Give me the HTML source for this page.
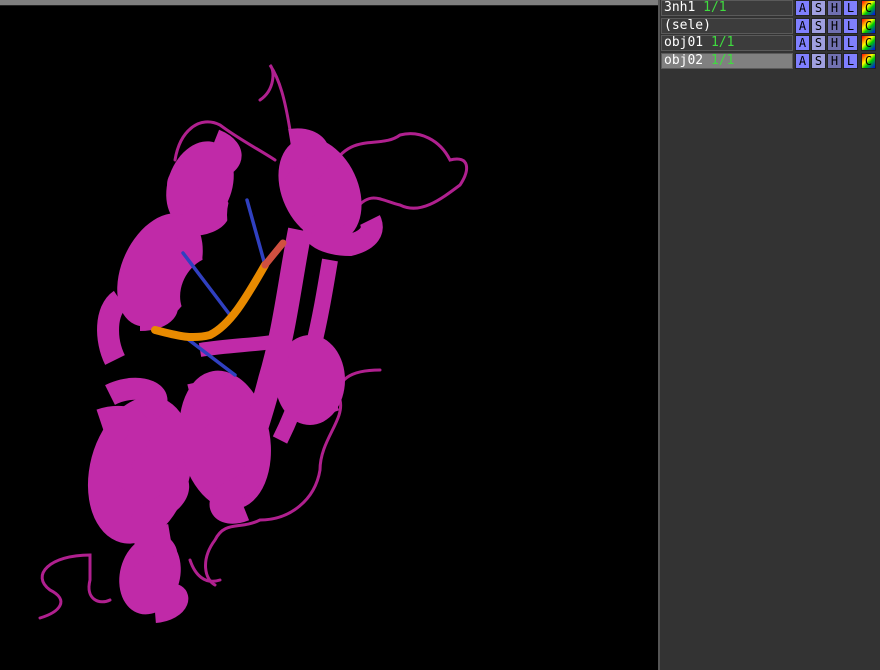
<!DOCTYPE html>
<html><head><style>
body{margin:0;width:880px;height:670px;background:#000;overflow:hidden;position:relative;font-family:"DejaVu Sans Mono","Liberation Mono",monospace;}
#top{position:absolute;left:0;top:0;width:658px;height:5px;background:#7f7f7f;border-bottom:1px solid #222;}
#panel{position:absolute;left:658px;top:0;width:222px;height:670px;background:#333;border-left:2px solid #555;box-sizing:border-box;}
.row{position:absolute;left:661px;height:16px;width:219px;}
.name{position:absolute;left:0;top:0;width:132px;height:16px;background:#3c3c3c;border:1px solid #5a5a5a;box-sizing:border-box;color:#fff;font-size:13px;line-height:14px;padding-left:2px;white-space:pre;}
.name.sel{background:#808080;}
.name b{font-weight:normal;color:#3fdc3f;}
.btn{position:absolute;top:0;width:15px;height:16px;box-sizing:border-box;border:1px solid #222;color:#000;font-size:12px;line-height:15px;text-align:center;}
</style></head><body>
<div id="top"></div>
<div id="panel"></div>

<div class="row" style="top:0"><div class="name">3nh1 <b>1/1</b></div>
<div class="btn" style="left:134px;background:#8080ff">A</div><div class="btn" style="left:150px;background:#a0a0e0">S</div><div class="btn" style="left:166px;background:#7070b0">H</div><div class="btn" style="left:182px;background:#8080ff">L</div><div class="btn" style="left:200px;background:linear-gradient(135deg,#f00,#ff0 40%,#0c0 60%,#00f)">C</div></div>
<div class="row" style="top:18px"><div class="name">(sele)</div>
<div class="btn" style="left:134px;background:#8080ff">A</div><div class="btn" style="left:150px;background:#a0a0e0">S</div><div class="btn" style="left:166px;background:#7070b0">H</div><div class="btn" style="left:182px;background:#8080ff">L</div><div class="btn" style="left:200px;background:linear-gradient(135deg,#f00,#ff0 40%,#0c0 60%,#00f)">C</div></div>
<div class="row" style="top:35px"><div class="name">obj01 <b>1/1</b></div>
<div class="btn" style="left:134px;background:#8080ff">A</div><div class="btn" style="left:150px;background:#a0a0e0">S</div><div class="btn" style="left:166px;background:#7070b0">H</div><div class="btn" style="left:182px;background:#8080ff">L</div><div class="btn" style="left:200px;background:linear-gradient(135deg,#f00,#ff0 40%,#0c0 60%,#00f)">C</div></div>
<div class="row" style="top:53px"><div class="name sel">obj02 <b>1/1</b></div>
<div class="btn" style="left:134px;background:#8080ff">A</div><div class="btn" style="left:150px;background:#a0a0e0">S</div><div class="btn" style="left:166px;background:#7070b0">H</div><div class="btn" style="left:182px;background:#8080ff">L</div><div class="btn" style="left:200px;background:linear-gradient(135deg,#f00,#ff0 40%,#0c0 60%,#00f)">C</div></div>

<svg width="658" height="664" style="position:absolute;left:0;top:6px" viewBox="0 6 658 664">
<g fill="none" stroke="#b0208f" stroke-width="3" stroke-linecap="round">
<path d="M40,618 C60,612 70,600 50,590 C30,575 50,555 90,555 L90,580 C85,600 100,605 110,600"/>
<path d="M330,170 C350,130 380,150 400,135 C420,130 440,140 450,160 C470,155 470,170 460,185 C440,200 420,215 400,205 C380,200 370,190 355,210"/>
<path d="M260,100 C275,90 275,70 270,65 C280,80 285,100 290,130"/>
<path d="M175,160 C180,130 200,115 220,125 C240,140 260,150 275,160"/>
<path d="M380,370 C350,370 335,380 340,400 C345,420 320,440 320,470 C315,500 290,520 260,520 C240,530 225,520 215,540 C200,560 205,580 215,585"/>
<path d="M190,560 C195,575 205,585 220,580"/>
</g>
<g fill="#c02aa8">
<ellipse cx="200" cy="185" rx="32" ry="45" transform="rotate(20 200 185)"/>
<ellipse cx="160" cy="270" rx="38" ry="60" transform="rotate(25 160 270)"/>
<ellipse cx="320" cy="190" rx="38" ry="55" transform="rotate(-25 320 190)"/>
<ellipse cx="140" cy="470" rx="50" ry="75" transform="rotate(15 140 470)"/>
<ellipse cx="150" cy="575" rx="30" ry="40" transform="rotate(15 150 575)"/>
<ellipse cx="225" cy="440" rx="45" ry="70" transform="rotate(-10 225 440)"/>
<ellipse cx="310" cy="380" rx="35" ry="45"/>
</g>
<g fill="none" stroke="#c02aa8" stroke-width="22" stroke-linecap="butt">
<path d="M215,140 C240,150 235,170 200,170 C170,175 170,195 205,200 C230,205 220,225 190,225 C160,225 155,245 185,255 C200,260 190,280 160,275 C135,275 130,295 160,300 C175,305 165,320 140,320"/>
<path d="M120,300 C105,310 105,340 115,360"/>
<path d="M290,140 C320,135 330,160 305,175 C285,185 295,200 325,195 C350,195 345,220 320,225 C305,230 320,245 350,245 C370,240 375,230 370,220"/>
<path d="M300,230 C290,280 285,330 270,380 C260,420 245,460 240,480" stroke-width="24"/>
<path d="M330,260 C320,320 310,380 280,440" stroke-width="16"/>
<path d="M100,420 C130,410 155,425 130,450 C105,470 130,490 160,480 C185,470 185,500 155,510 C130,520 140,540 170,535"/>
<path d="M110,395 C140,380 170,395 150,410"/>
<path d="M190,395 C230,385 250,410 220,430 C195,445 215,465 245,455 C265,450 260,480 235,490 C210,500 220,520 245,510"/>
<path d="M135,545 C165,535 180,560 150,570 C125,580 135,600 165,595 C185,590 180,610 155,612"/>
<path d="M290,360 C320,350 340,370 315,385 C290,400 310,410 335,400"/>
<path d="M200,350 C230,345 260,345 285,340" stroke-width="14"/>
</g>
<g fill="#000">
<ellipse cx="210" cy="290" rx="28" ry="35" transform="rotate(30 210 290)"/>
<ellipse cx="245" cy="215" rx="18" ry="30"/>
</g>
<g stroke="#3040c0" stroke-width="3.5" stroke-linecap="round">
<line x1="247" y1="200" x2="265" y2="265"/>
<line x1="183" y1="253" x2="230" y2="315"/>
<line x1="185" y1="337" x2="235" y2="375"/>
</g>
<path d="M155,330 C175,335 190,340 210,335 C230,325 245,300 265,265" fill="none" stroke="#e88a00" stroke-width="8" stroke-linecap="round"/>
<path d="M265,265 L283,243" stroke="#d05040" stroke-width="7" stroke-linecap="round"/>
</svg>
</body></html>
